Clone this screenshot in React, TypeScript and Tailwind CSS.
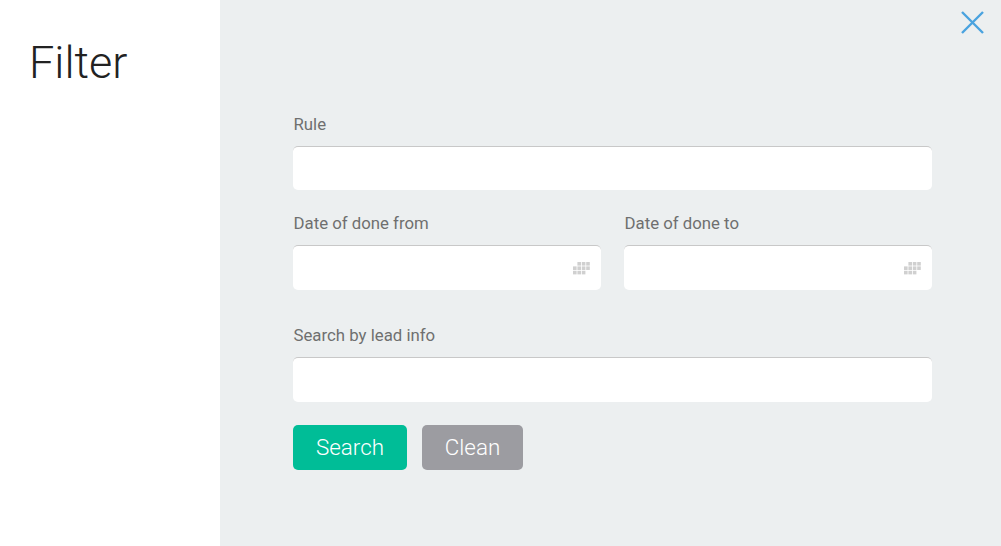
function CalendarDots() {
  // little grid icon at the right of the date inputs
  const cells = [
    [4.4, 0], [8.8, 0], [13.2, 0],
    [0, 4.4], [4.4, 4.4], [8.8, 4.4], [13.2, 4.4],
    [0, 8.8], [4.4, 8.8], [8.8, 8.8],
  ];
  return (
    <svg width="17" height="12.4" viewBox="0 0 17 12.4" className="absolute right-[11.5px] top-[17px]">
      {cells.map(([x, y]) => (
        <rect key={`${x}-${y}`} x={x} y={y} width="3.6" height="3.6" fill="#d0d0d0" />
      ))}
    </svg>
  );
}

function Field({ label, date, className }: { label: string; date?: boolean; className?: string }) {
  return (
    <div className={className}>
      <label className="block h-[19px] pl-[0.5px] text-[16.8px] leading-[19px] text-[#6f6f6f]">{label}</label>
      <div className="relative mt-[12px]">
        <input
          type="text"
          className="block h-[44.6px] w-full rounded-[5px] border-t border-t-[#c8c8c8] bg-white outline-none"
        />
        {date && <CalendarDots />}
      </div>
    </div>
  );
}

export default function App() {
  return (
    <div className="flex h-[546px] w-[1001px] overflow-hidden bg-white font-['Roboto',sans-serif]">
      <aside className="w-[220px] shrink-0 pl-[29px] pt-[36px]">
        <h1 className="text-[45px] font-light leading-[53px] text-[#222222]">Filter</h1>
      </aside>

      <main className="relative flex-1 bg-[#eceff0] pl-[73px] pr-[69px] pt-[114.8px]">
        <button className="absolute right-[17px] top-[11px] text-[#4aa3df]">
          <svg width="23" height="23" viewBox="0 0 23 23" fill="none" stroke="currentColor" strokeWidth="2.4">
            <path d="M1 1 L22 22 M22 1 L1 22" />
          </svg>
        </button>

        <Field label="Rule" />

        <div className="mt-[23.8px] flex gap-[23px]">
          <Field label="Date of done from" date className="w-[308px]" />
          <Field label="Date of done to" date className="flex-1" />
        </div>

        <Field label="Search by lead info" className="mt-[36.2px]" />

        <div className="mt-[23.4px] flex gap-[15px]">
          <button className="h-[45px] w-[114px] rounded-[5px] bg-[#00bd97] pt-[1px] text-[22.4px] font-light text-white">
            Search
          </button>
          <button className="h-[45px] w-[101px] rounded-[5px] bg-[#9c9ca1] pt-[1px] text-[22.4px] font-light text-white">
            Clean
          </button>
        </div>
      </main>
    </div>
  );
}
